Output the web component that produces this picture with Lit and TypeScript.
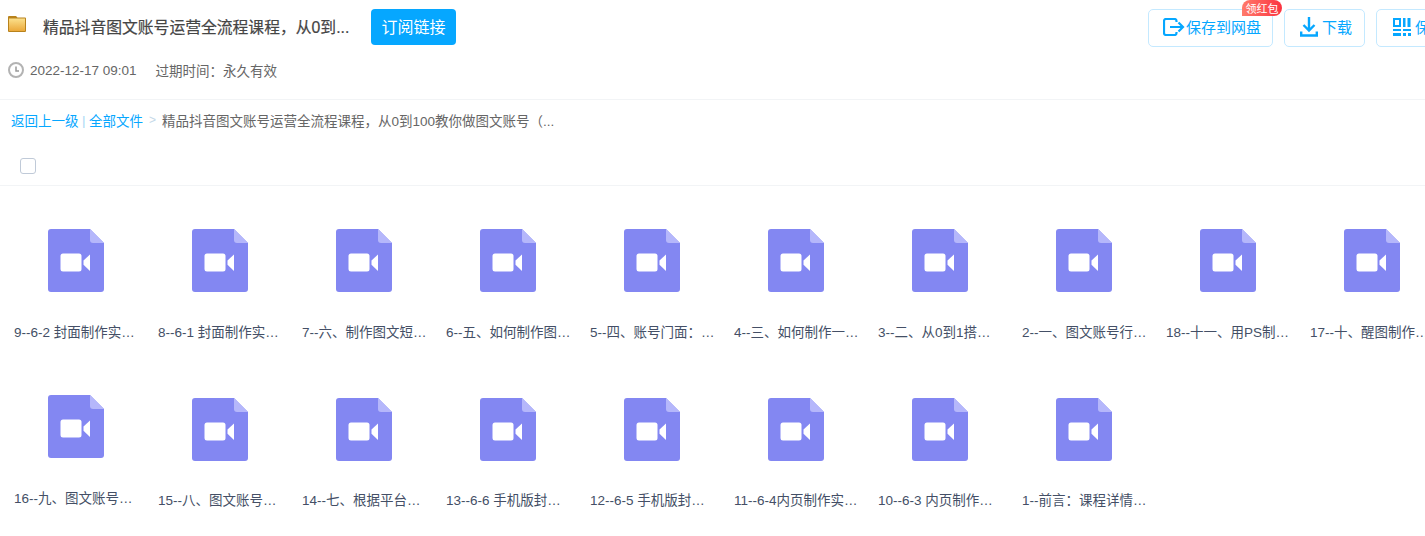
import { LitElement, html, css, svg } from "lit";
import { customElement } from "lit/decorators.js";

const names: [string, boolean?][] = [
  ["9--6-2 封面制作实…"], ["8--6-1 封面制作实…"], ["7--六、制作图文短…"], ["6--五、如何制作图…"], ["5--四、账号门面：…"],
  ["4--三、如何制作一…"], ["3--二、从0到1搭…"], ["2--一、图文账号行…"], ["18--十一、用PS制…"], ["17--十、醒图制作…"],
  ["16--九、图文账号…", true], ["15--八、图文账号…"], ["14--七、根据平台…"], ["13--6-6 手机版封…"], ["12--6-5 手机版封…"],
  ["11--6-4内页制作实…"], ["10--6-3 内页制作…"], ["1--前言：课程详情…"],
];

const fileIcon = svg`<svg class="file" width="56" height="63" viewBox="0 0 56 63">
  <path d="M3 0H42L56 14V60a3 3 0 0 1-3 3H3a3 3 0 0 1-3-3V3a3 3 0 0 1 3-3Z" fill="#8387f2"/>
  <path d="M42 0L56 14H45a3 3 0 0 1-3-3Z" fill="#b5b7fb"/>
  <rect x="12.500" y="24.500" width="21" height="18" rx="2.500" fill="#fff"/>
  <path d="M42 25.500V42L35.500 35.800V31.500Z" fill="#fff"/>
</svg>`;

@customElement("app-root")
export class AppRoot extends LitElement {
  static styles = css`
    :host { display: block; width: 1425px; height: 536px; overflow: hidden; background: #fff;
      font-family: "Liberation Sans", "Noto Sans CJK SC", sans-serif; color: #666; }
    .head { height: 100px; box-sizing: border-box; border-bottom: 1px solid #f2f4f6; display: flex; justify-content: space-between; }
    .left { padding: 9px 0 0 8px; }
    .title-row { display: flex; align-items: center; height: 36px; }
    .folder { margin-top: -6px; flex: none; }
    .title { margin-left: 17px; width: 306px; font-size: 15.800px; font-weight: 400; color: #454545; -webkit-text-stroke: 0.2px #454545; white-space: nowrap; margin-top: -2px; }
    .sub { margin-left: 22px; width: 85px; height: 36px; border-radius: 4px; background: #06a7ff; color: #fff; font-size: 16px; display: flex; align-items: center; justify-content: center; padding-bottom: 2px; box-sizing: border-box; }
    .meta { display: flex; align-items: center; margin-top: 14px; font-size: 13.500px; color: #666; height: 22px; }
    .meta .date { margin-left: 6px; }
    .meta .exp { margin-left: 19px; }
    .actions { display: flex; gap: 11px; padding-top: 9px; margin-right: -61px; align-items: flex-start; }
    .btn { position: relative; height: 38px; box-sizing: border-box; border: 1px solid #c4e9ff; border-radius: 5px; display: flex; align-items: center; padding: 0 11px 3px 14px; color: #06a7ff; font-size: 15px; gap: 1px; white-space: nowrap; }
    .btn svg { flex: none; }
    .btn.save { width: 125px; }
    .btn.dl { width: 81px; padding-left: 15px; gap: 4px; }
    .btn.qr { width: 110px; padding-left: 16px; gap: 4px; }
    .badge { position: absolute; top: -10px; right: -10px; height: 16px; width: 40px; border-radius: 8px 8px 8px 0; background: linear-gradient(90deg, #ff7a6b, #fb3340); color: #fff; font-size: 11px; display: flex; align-items: center; justify-content: center; }
    .crumbs { height: 40px; display: flex; align-items: center; padding-left: 11px; font-size: 13.500px; white-space: nowrap; }
    .crumbs a { color: #06a7ff; }
    .crumbs .bar { color: #a8d8f5; margin: 0 3.500px; }
    .crumbs .gt { color: #c4d8e8; margin: 0 6px; font-size: 12px; }
    .crumbs .cur { color: #666; }
    .check-row { height: 46px; box-sizing: border-box; border-bottom: 1px solid #f2f4f6; display: flex; align-items: center; padding: 7px 0 0 20px; }
    .check { width: 14px; height: 14px; border: 1px solid #c0cad8; border-radius: 3px; }
    .grid { display: grid; grid-template-columns: repeat(10, 144px); grid-auto-rows: 166px; padding-left: 4px; }
    .cell { display: flex; flex-direction: column; padding-top: 43px; align-items: flex-start; box-sizing: border-box; }
    .row2 { padding-top: 46px; }
    .row2.raised { padding-top: 43px; }
    .file { margin-left: 44px; flex: none; }
    .name { margin: 32px 0 0 10px; font-size: 13.500px; line-height: 18px; color: #444f66; white-space: nowrap; }
    .row2 .name { margin-top: 31px; }
    .row2.raised .name { margin-top: 32px; }
  `;

  render() {
    return html`
      <div class="head">
        <div class="left">
          <div class="title-row">
            <svg class="folder" width="18" height="16" viewBox="0 0 18 16">
              <defs>
                <linearGradient id="fg" x1="0" y1="0" x2="0" y2="1">
                  <stop offset="0" stop-color="#fbe08c"/>
                  <stop offset="1" stop-color="#eba93a"/>
                </linearGradient>
              </defs>
              <path d="M0 1A1 1 0 0 1 1 0H8L9.500 1.500H17a1 1 0 0 1 1 1V15a1 1 0 0 1-1 1H1a1 1 0 0 1-1-1Z" fill="#b8821c"/>
              <rect x="1" y="2.500" width="16" height="12.500" fill="url(#fg)"/>
            </svg>
            <div class="title">精品抖音图文账号运营全流程课程，从0到...</div>
            <div class="sub">订阅链接</div>
          </div>
          <div class="meta">
            <svg width="16" height="16" viewBox="0 0 16 16" fill="none" stroke="#b3b3b3">
              <circle cx="8" cy="8" r="7" stroke-width="2"/>
              <path d="M8 4.500V9H11" stroke-width="1.500" stroke="#999"/>
            </svg>
            <span class="date">2022-12-17 09:01</span>
            <span class="exp">过期时间：永久有效</span>
          </div>
        </div>
        <div class="actions">
          <div class="btn save">
            <svg width="22" height="18" viewBox="0 0 22 18" fill="none" stroke="#06a7ff" stroke-width="2.200">
              <path d="M13.500 4V3a2 2 0 0 0-2-2H3a2 2 0 0 0-2 2V15a2 2 0 0 0 2 2H11.500a2 2 0 0 0 2-2V14"/>
              <path d="M7 9H20M15.500 4.500L20 9L15.500 13.500"/>
            </svg>
            保存到网盘
            <span class="badge">领红包</span>
          </div>
          <div class="btn dl">
            <svg width="18" height="20" viewBox="0 0 18 20" fill="none" stroke="#06a7ff" stroke-width="2.400">
              <path d="M9 0V13M3.500 8L9 13.500L14.500 8"/>
              <path d="M1.200 14.500V18.500H16.800V14.500"/>
            </svg>
            下载
          </div>
          <div class="btn qr">
            <svg width="18" height="18" viewBox="0 0 18 18" fill="#06a7ff">
              <path fill-rule="evenodd" d="M0 0H8V9H0ZM2 2V7H6V2Z"/>
              <rect x="10" y="0" width="2.500" height="9"/><rect x="14.500" y="0" width="3" height="9"/>
              <rect x="0" y="11" width="8" height="2"/><rect x="0" y="15" width="8" height="3"/>
              <rect x="10" y="11" width="8" height="2"/><rect x="10" y="15" width="3" height="3"/><rect x="15" y="15" width="3" height="3"/>
            </svg>
            保存到手机
          </div>
        </div>
      </div>
      <div class="crumbs">
        <a>返回上一级</a><span class="bar">|</span><a>全部文件</a><span class="gt">&gt;</span>
        <span class="cur">精品抖音图文账号运营全流程课程，从0到100教你做图文账号（...</span>
      </div>
      <div class="check-row"><div class="check"></div></div>
      <div class="grid">
        ${names.map(([n, raised], i) => html`
          <div class="cell ${i >= 10 ? "row2" : ""} ${raised ? "raised" : ""}">
            ${fileIcon}
            <div class="name">${n}</div>
          </div>`)}
      </div>
    `;
  }
}
